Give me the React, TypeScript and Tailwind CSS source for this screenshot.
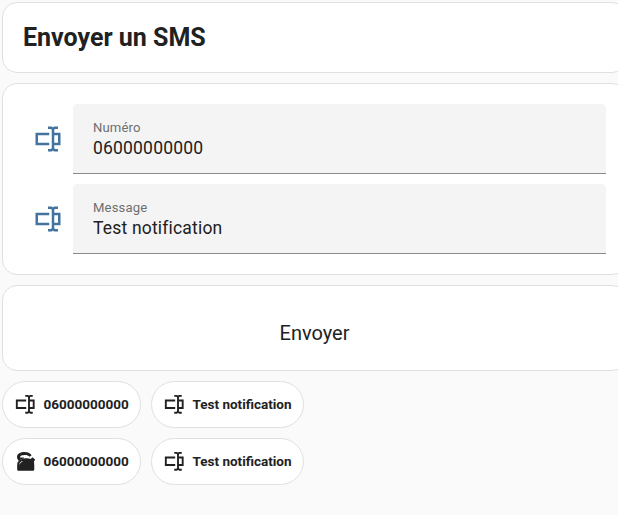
import type { ReactNode } from "react";

function TextboxIcon({ className }: { className?: string }) {
    return (
        <svg viewBox="0 0 24 24" fill="currentColor" className={className}>
            <path d="M17,7H22V17H17V19A1,1 0 0,0 18,20H20V22H17.5C16.95,22 16,21.55 16,21C16,21.55 15.05,22 14.5,22H12V20H14A1,1 0 0,0 15,19V5A1,1 0 0,0 14,4H12V2H14.5C15.05,2 16,2.45 16,3C16,2.45 16.95,2 17.5,2H20V4H18A1,1 0 0,0 17,5V7M2,7H13V9H4V15H13V17H2V7M20,15V9H17V15H20Z" />
        </svg>
    );
}

function KettleIcon({ className }: { className?: string }) {
    return (
        <svg viewBox="0 0 24 24" fill="currentColor" className={className}>
            {/* handle */}
            <path d="M11.5,2.1C7,2.1 3.2,4 3.2,7.2C3.2,9 4,10.6 5.2,11.6C6.8,10.2 8.6,9.4 10.6,9V7.9H6.4C6.2,6.2 8.3,5.3 11.5,5.3C13.9,5.3 15.4,5.8 16.6,7.2L18.8,5.6C17.2,3.3 14.4,2.1 11.5,2.1Z" />
            {/* body, with the highlight on its left side */}
            <path fillRule="evenodd" d="M12.5,8.9C14.5,8.7 16.2,8.9 17.8,9.5L19.6,7.8L20.8,8.9L22.6,10.2L21.2,12.6C21.5,13.8 21.6,15 21.6,16.5V20.4C21.6,21.5 21,22.1 20,22.1H5C4,22.1 3.4,21.5 3.4,20.4V15.8C3.4,12.2 7,9.2 12.5,8.9ZM5.6,16.4C6.2,14.1 7.8,12.6 10,11.8C7.4,11.7 5.4,13.6 5.6,16.4Z" />
        </svg>
    );
}

function Card({ className, children }: { className: string; children: ReactNode }) {
    return (
        <section className={`w-[625px] rounded-[15px] border border-[#e0e0e0] bg-white ${className}`}>
            {children}
        </section>
    );
}

function Field({ label, value }: { label: string; value: string }) {
    return (
        <div className="flex items-center">
            <TextboxIcon className="mr-[10px] ml-[30px] size-[30px] shrink-0 text-[#44739e]" />
            <div className="h-[70px] w-[533px] rounded-t-[5px] border-b border-[#8a8a8a] bg-[#f4f4f4] px-5 pt-[15px]">
                <div className="text-[13.125px] leading-[17px] tracking-[0.12px] text-[#6f6f6f]">{label}</div>
                <div className="text-[17.5px] leading-6 tracking-[0.1875px] text-[#212121]">{value}</div>
            </div>
        </div>
    );
}

function Chip({ icon, label }: { icon: ReactNode; label: string }) {
    return (
        <div className="flex h-[47px] items-center gap-[7px] rounded-full border border-[#e0e0e0] bg-white pr-[11.3px] pl-[11px] text-[13.5px] font-bold text-[#212121]">
            {icon}
            <span>{label}</span>
        </div>
    );
}

export default function App() {
    return (
        <div className="flex h-[515px] w-[618px] flex-col gap-[10px] overflow-hidden bg-[#fafafa] pt-[2px] pl-[2px] font-[Roboto,sans-serif] text-[#212121]">
            <Card className="h-[71px] shrink-0 px-5 pt-[15px]">
                <h1 className="text-[25px] leading-10 font-bold">Envoyer un SMS</h1>
            </Card>

            <Card className="flex h-[192px] shrink-0 flex-col gap-[10px] pt-5">
                <Field label="Numéro" value="06000000000" />
                <Field label="Message" value="Test notification" />
            </Card>

            <Card className="flex h-[86px] shrink-0 items-center justify-center pt-[9px]">
                <button className="text-[20px] leading-7">Envoyer</button>
            </Card>

            {/* Chips */}
            <div className="flex gap-[10px]">
                <Chip icon={<TextboxIcon className="size-[22.5px]" />} label="06000000000" />
                <Chip icon={<TextboxIcon className="size-[22.5px]" />} label="Test notification" />
            </div>
            <div className="flex gap-[10px]">
                <Chip icon={<KettleIcon className="size-[22.5px]" />} label="06000000000" />
                <Chip icon={<TextboxIcon className="size-[22.5px]" />} label="Test notification" />
            </div>
        </div>
    );
}
